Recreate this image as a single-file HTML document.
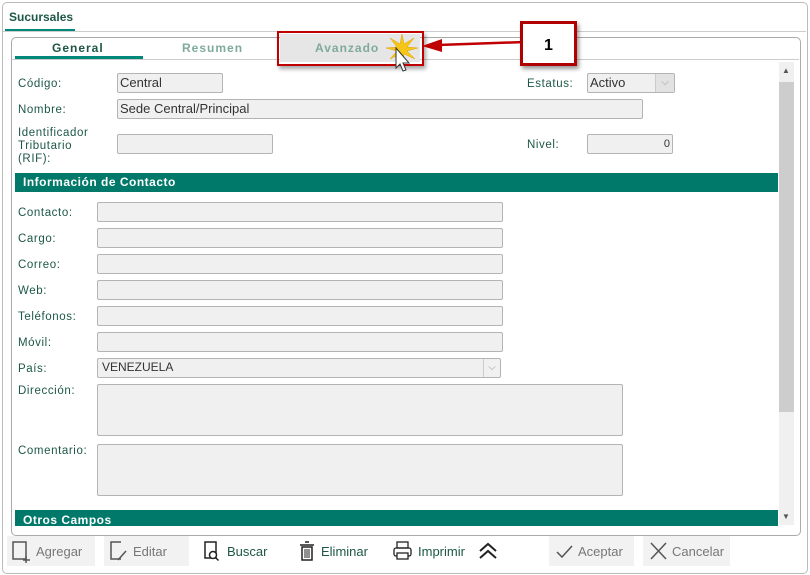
<!DOCTYPE html><html><head><meta charset="utf-8"><style>
body{margin:0;width:810px;height:575px;background:#fff;font-family:"Liberation Sans",sans-serif;position:relative;overflow:hidden}
.a{position:absolute}
.lbl{position:absolute;font-size:11.5px;color:#1d5747;letter-spacing:.6px;margin-top:2px}
.in{position:absolute;background:#f0f0f0;border:1px solid #b4b4b4;border-radius:2px;box-sizing:border-box;font-size:13px;color:#333;padding:1px 2px;height:20px}
.bar{position:absolute;left:15px;width:763px;background:#00796a;color:#fff;font-weight:bold;font-size:12px;letter-spacing:.5px;padding-left:8px;box-sizing:border-box}
.btn{position:absolute;top:536px;height:30px;font-size:13px;display:flex;align-items:center;gap:3px;padding:0 4px;box-sizing:border-box}
.dis{background:#f2f2f2;color:#777}
.en{color:#1d5747}
</style></head><body>
<div class="a" style="left:2px;top:2px;width:804px;height:570px;border:1px solid #bbb;border-radius:5px"></div>
<div class="a" style="left:9px;top:10px;font-size:12px;font-weight:bold;color:#1d5747">Sucursales</div>
<div class="a" style="left:5px;top:29px;width:70px;height:3px;background:#00897b"></div>
<div class="a" style="left:3px;top:31px;width:803px;height:1px;background:#ccc"></div>
<div class="a" style="left:11px;top:37px;width:788px;height:497px;border:1px solid #aaa;border-radius:5px"></div>
<div class="a" style="left:12px;top:59px;width:787px;height:1px;background:#ccc"></div>
<div class="a" style="left:52px;top:41px;font-size:12px;font-weight:bold;color:#1d5747;letter-spacing:1px">General</div>
<div class="a" style="left:15px;top:56px;width:128px;height:3px;background:#00897b"></div>
<div class="a" style="left:182px;top:41px;font-size:12px;font-weight:bold;color:#7fa99c;letter-spacing:1px">Resumen</div>
<div class="a" style="left:280px;top:34px;width:140px;height:28px;background:#e6e6e6"></div>
<div class="a" style="left:315px;top:41px;font-size:12px;font-weight:bold;color:#7fa99c;letter-spacing:1px">Avanzado</div>
<div class="a" style="left:277px;top:31px;width:143px;height:31px;border:2px solid #c00000;box-shadow:2px 3px 4px rgba(0,0,0,.35)"></div>
<svg class="a" style="left:382px;top:34px" width="40" height="42"><polygon points="20,0 22,10 32,4 25,13 36,14 25,17 33,25 22,20 20,30 18,20 8,25 15,17 4,14 15,13 8,4 18,10" fill="#f5c518" stroke="#e0a000" stroke-width=".5"/><path d="M14,14 L14,34 L18,30 L21,37 L24,36 L21,29 L27,29 Z" fill="#fff" stroke="#333" stroke-width="1"/></svg>
<svg class="a" style="left:420px;top:36px" width="105" height="18"><line x1="18" y1="9" x2="105" y2="6" stroke="#c00000" stroke-width="2.5"/><polygon points="2,10 22,3 22,16" fill="#c00000"/></svg>
<div class="a" style="left:520px;top:21px;width:57px;height:45px;border:3px solid #b00000;background:#fff;box-shadow:2px 3px 4px rgba(0,0,0,.4);box-sizing:border-box;text-align:center;font-weight:bold;font-size:16px;line-height:44px">1</div>

<div class="lbl" style="left:18px;top:76px">Código:</div><div class="in" style="left:117px;top:73px;width:106px">Central</div>
<div class="lbl" style="left:527px;top:76px">Estatus:</div><div class="in" style="left:587px;top:73px;width:88px">Activo<span style="position:absolute;right:0;top:0;width:18px;height:18px;border-left:1px solid #ccc;background:#e2e2e2;color:#999;font-size:10px;text-align:center;line-height:18px">⌵</span></div>
<div class="lbl" style="left:18px;top:102px">Nombre:</div><div class="in" style="left:117px;top:99px;width:526px">Sede Central/Principal</div>
<div class="lbl" style="left:18px;top:125px;line-height:13px">Identificador<br>Tributario<br>(RIF):</div><div class="in" style="left:117px;top:134px;width:156px"></div>
<div class="lbl" style="left:527px;top:137px">Nivel:</div><div class="in" style="left:587px;top:134px;width:86px;text-align:right;font-size:11px;padding-top:3px">0</div>

<div class="a" style="left:779px;top:62px;width:15px;height:463px;background:#f0f0f0"></div>
<div class="a" style="left:779px;top:82px;width:15px;height:330px;background:#cdcdcd"></div>
<div class="a" style="left:782px;top:66px;font-size:8px;color:#555">▲</div>
<div class="a" style="left:782px;top:512px;font-size:8px;color:#555">▼</div>

<div class="bar" style="top:173px;height:19px;line-height:19px">Información de Contacto</div>
<div class="lbl" style="left:18px;top:205px">Contacto:</div><div class="in" style="left:97px;top:202px;width:406px"></div>
<div class="lbl" style="left:18px;top:231px">Cargo:</div><div class="in" style="left:97px;top:228px;width:406px"></div>
<div class="lbl" style="left:18px;top:257px">Correo:</div><div class="in" style="left:97px;top:254px;width:406px"></div>
<div class="lbl" style="left:18px;top:283px">Web:</div><div class="in" style="left:97px;top:280px;width:406px"></div>
<div class="lbl" style="left:18px;top:309px">Teléfonos:</div><div class="in" style="left:97px;top:306px;width:406px"></div>
<div class="lbl" style="left:18px;top:335px">Móvil:</div><div class="in" style="left:97px;top:332px;width:406px"></div>
<div class="lbl" style="left:18px;top:361px">País:</div><div class="in" style="left:97px;top:358px;width:404px;font-size:12px;padding-left:4px">VENEZUELA<span style="position:absolute;right:0;top:0;width:16px;height:18px;border-left:1px solid #ccc;color:#999;font-size:10px;text-align:center;line-height:18px">⌵</span></div>
<div class="lbl" style="left:18px;top:383px">Dirección:</div><div class="in" style="left:97px;top:384px;width:526px;height:52px"></div>
<div class="lbl" style="left:18px;top:443px">Comentario:</div><div class="in" style="left:97px;top:444px;width:526px;height:52px"></div>
<div class="bar" style="top:510px;height:16px;line-height:20px;overflow:hidden">Otros Campos</div>

<div class="btn dis" style="left:7px;width:88px"><svg width="22" height="24"><rect x="2" y="3" width="13" height="17" fill="none" stroke="#555" stroke-width="1.5"/><path d="M15 17v7M12 21h7" stroke="#555" stroke-width="1.5"/></svg>Agregar</div>
<div class="btn dis" style="left:104px;width:85px"><svg width="22" height="24"><path d="M13 3H3v17h10" fill="none" stroke="#555" stroke-width="1.5"/><path d="M10 21l8-9" stroke="#555" stroke-width="1.5"/></svg>Editar</div>
<div class="btn en" style="left:196px;width:85px"><svg width="24" height="24"><rect x="5" y="3" width="11" height="16" fill="none" stroke="#222" stroke-width="1.5"/><circle cx="13" cy="16" r="3.5" fill="#fff" stroke="#222" stroke-width="1.5"/><path d="M15.5 18.5l3 3" stroke="#222" stroke-width="1.5"/></svg>Buscar</div>
<div class="btn en" style="left:292px;width:85px"><svg width="22" height="24"><path d="M4 6h14M9 3h4M6 8h10v13H6z" fill="none" stroke="#222" stroke-width="1.5"/><path d="M9 10v9M11 10v9M13 10v9" stroke="#222"/></svg>Eliminar</div>
<div class="btn en" style="left:387px;width:85px"><svg width="24" height="24"><rect x="6" y="3" width="11" height="6" fill="none" stroke="#222" stroke-width="1.3"/><rect x="3" y="9" width="17" height="8" rx="2" fill="none" stroke="#222" stroke-width="1.3"/><rect x="6" y="14" width="11" height="6" fill="#fff" stroke="#222" stroke-width="1.3"/></svg>Imprimir</div>
<svg class="a" style="left:476px;top:541px" width="24" height="20"><path d="M4 10l8-7 8 7M4 17l8-7 8 7" fill="none" stroke="#222" stroke-width="2"/></svg>
<div class="btn dis" style="left:549px;width:85px"><svg width="22" height="24"><path d="M4 13l5 5 10-11" fill="none" stroke="#555" stroke-width="1.5"/></svg>Aceptar</div>
<div class="btn dis" style="left:643px;width:87px"><svg width="22" height="24"><path d="M4 4l15 16M19 4L4 20" stroke="#555" stroke-width="1.5"/></svg>Cancelar</div>
</body></html>
